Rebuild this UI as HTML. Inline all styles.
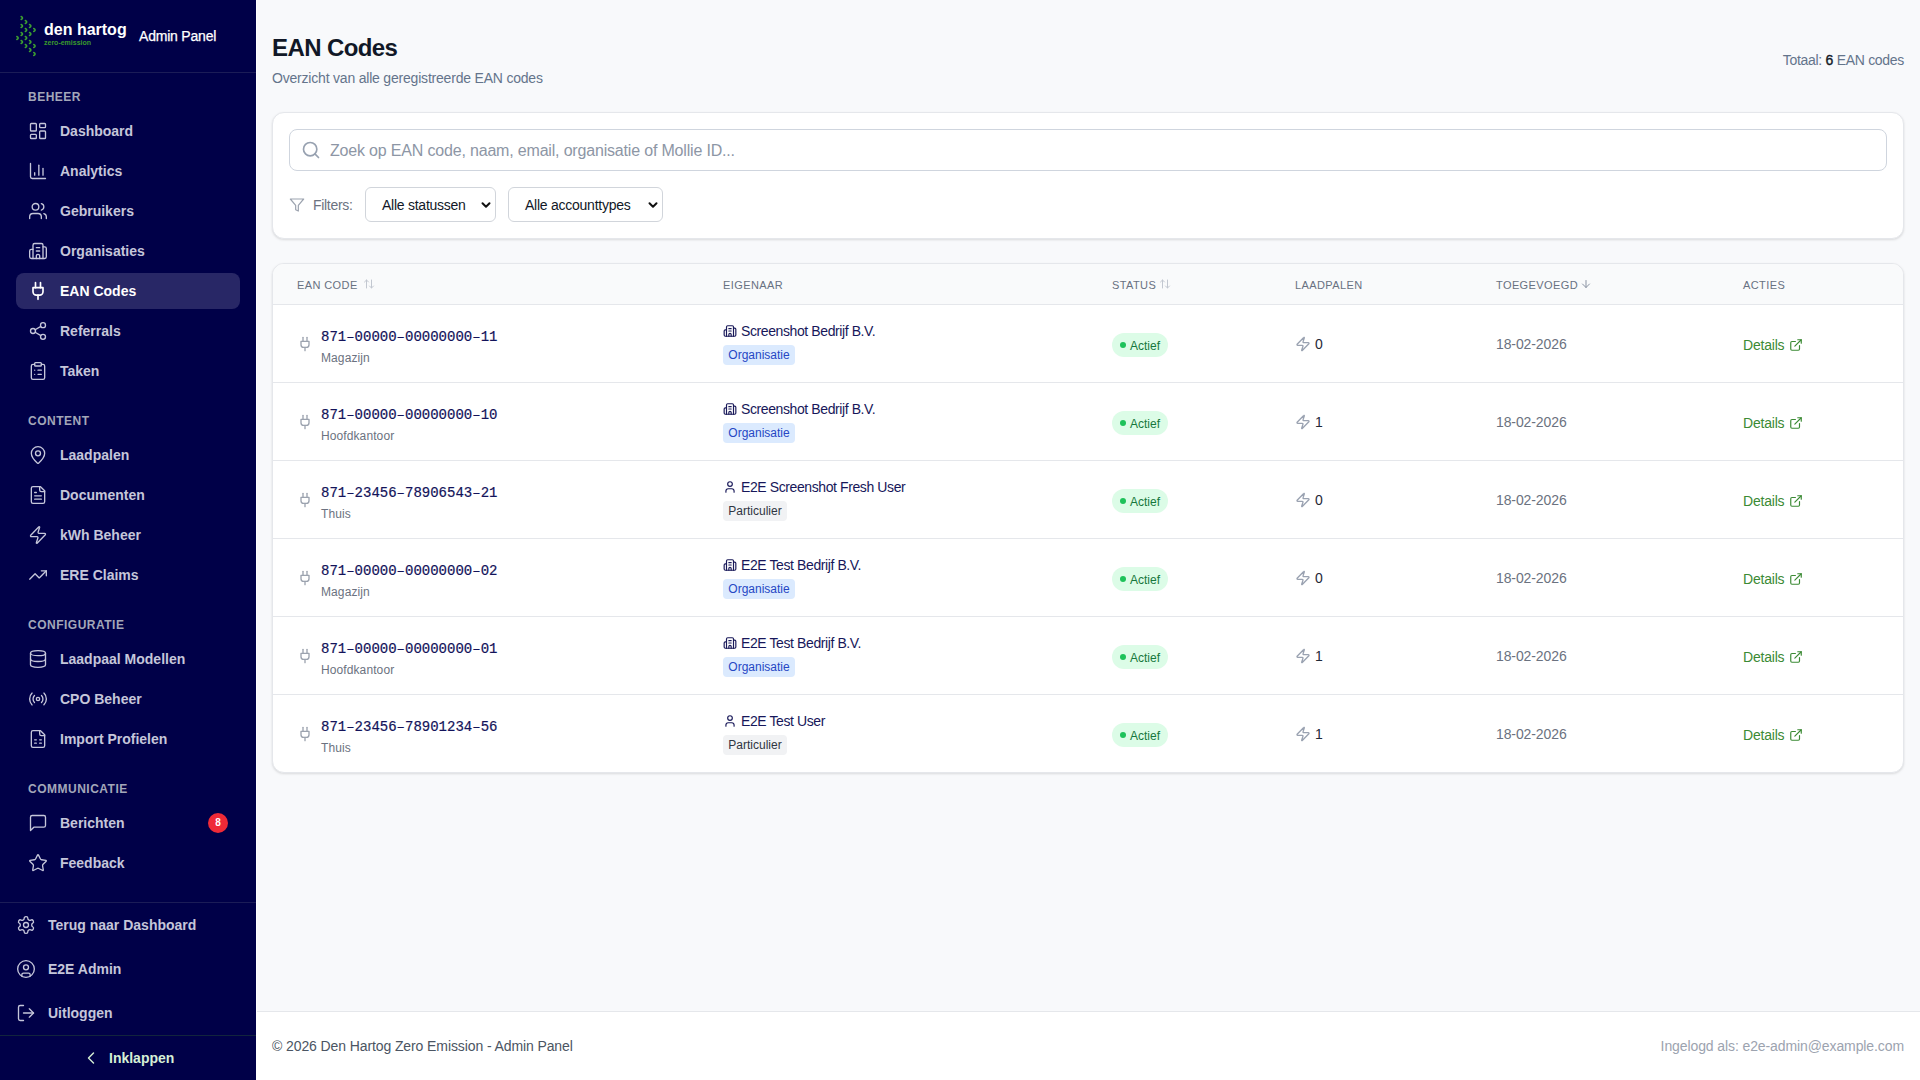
<!DOCTYPE html>
<html><head><meta charset="utf-8"><title>EAN Codes</title>
<style>
*{box-sizing:border-box;margin:0;padding:0}
html,body{width:1920px;height:1080px;overflow:hidden;background:#f8f9fb;font-family:"Liberation Sans",sans-serif}
.ic{position:absolute;display:block}
.t{position:absolute;white-space:nowrap}
#side{position:absolute;left:0;top:0;width:256px;height:1080px;background:#000048}
#side .hr{position:absolute;left:0;width:256px;height:1px}
.lbl{position:absolute;left:28px;height:16px;line-height:16px;font-size:12px;font-weight:bold;letter-spacing:0.5px;color:#a3a7b9;white-space:nowrap}
.nav{position:absolute;left:60px;height:20px;line-height:20px;font-size:14px;font-weight:bold;white-space:nowrap}
.act{position:absolute;left:16px;width:224px;height:36px;border-radius:8px;background:#282766}
.badge{position:absolute;left:208px;top:813px;width:20px;height:20px;border-radius:10px;background:#ef2a37;color:#fff;font-size:10px;font-weight:bold;line-height:20px;text-align:center}
#edge{position:absolute;left:256px;top:0;width:1px;height:1080px;background:#ffffff}

.card{position:absolute;left:272px;width:1632px;background:#fff;border:1px solid #e5e7eb;border-radius:12px;box-shadow:0 1px 3px rgba(0,0,0,.08),0 1px 2px rgba(0,0,0,.05)}
.th{position:absolute;top:278px;font-size:11px;line-height:14px;color:#687182;letter-spacing:0.4px;white-space:nowrap}
.mono{font-family:"Liberation Mono",monospace;font-size:14px;line-height:16px;color:#13135a;-webkit-text-stroke:0.2px #13135a}
.pill{position:absolute;height:20px;border-radius:4px;font-size:12px;line-height:21px;text-align:center}
</style></head><body>
<div id="side">
<svg class="ic" style="left:0;top:0" width="48" height="72" viewBox="0 0 48 72" fill="none" stroke="#3c9f31" stroke-width="1.5" stroke-linecap="round"><path d="M21.10 16.50Q24.00 18.00 21.10 19.50M25.30 20.50Q28.20 22.00 25.30 23.50M21.10 24.50Q24.00 26.00 21.10 27.50M29.50 24.50Q32.40 26.00 29.50 27.50M25.30 28.50Q28.20 30.00 25.30 31.50M33.70 28.50Q36.60 30.00 33.70 31.50M21.10 32.50Q24.00 34.00 21.10 35.50M29.50 32.50Q32.40 34.00 29.50 35.50M16.80 36.50Q19.70 38.00 16.80 39.50M25.30 36.50Q28.20 38.00 25.30 39.50M21.10 40.50Q24.00 42.00 21.10 43.50M29.50 40.50Q32.40 42.00 29.50 43.50M25.30 44.50Q28.20 46.00 25.30 47.50M33.70 44.50Q36.60 46.00 33.70 47.50M29.50 48.50Q32.40 50.00 29.50 51.50M33.70 52.50Q36.60 54.00 33.70 55.50"/></svg>
<div class="t" style="left:44px;top:20px;font-size:16px;font-weight:bold;color:#fff;line-height:20px">den hartog</div>
<div class="t" style="left:44px;top:38px;font-size:7px;font-weight:bold;color:#3b9a2d;line-height:9px">zero-emission</div>
<div class="t" style="left:139px;top:27px;font-size:14px;color:#fff;line-height:18px;letter-spacing:-0.2px;-webkit-text-stroke:0.25px #fff">Admin Panel</div>
<div class="hr" style="top:72px;background:#1b1c57"></div>
<div class="lbl" style="top:88.5px">BEHEER</div>
<div class="lbl" style="top:412.5px">CONTENT</div>
<div class="lbl" style="top:616.5px">CONFIGURATIE</div>
<div class="lbl" style="top:780.5px">COMMUNICATIE</div>
<svg class="ic" style="left:28px;top:121px;" width="20" height="20" viewBox="0 0 24 24" fill="none" stroke="#c5c6da" stroke-width="1.6" stroke-linecap="round" stroke-linejoin="round"><rect width="7" height="9" x="3" y="3" rx="1"/><rect width="7" height="5" x="14" y="3" rx="1"/><rect width="7" height="9" x="14" y="12" rx="1"/><rect width="7" height="5" x="3" y="16" rx="1"/></svg>
<div class="nav" style="top:121px;color:#c5c6da">Dashboard</div>
<svg class="ic" style="left:28px;top:161px;" width="20" height="20" viewBox="0 0 24 24" fill="none" stroke="#c5c6da" stroke-width="1.6" stroke-linecap="round" stroke-linejoin="round"><path d="M3 3v16a2 2 0 0 0 2 2h16"/><path d="M18 17V9"/><path d="M13 17V5"/><path d="M8 17v-3"/></svg>
<div class="nav" style="top:161px;color:#c5c6da">Analytics</div>
<svg class="ic" style="left:28px;top:201px;" width="20" height="20" viewBox="0 0 24 24" fill="none" stroke="#c5c6da" stroke-width="1.6" stroke-linecap="round" stroke-linejoin="round"><path d="M16 21v-2a4 4 0 0 0-4-4H6a4 4 0 0 0-4 4v2"/><circle cx="9" cy="7" r="4"/><path d="M22 21v-2a4 4 0 0 0-3-3.87"/><path d="M16 3.13a4 4 0 0 1 0 7.75"/></svg>
<div class="nav" style="top:201px;color:#c5c6da">Gebruikers</div>
<svg class="ic" style="left:28px;top:241px;" width="20" height="20" viewBox="0 0 24 24" fill="none" stroke="#c5c6da" stroke-width="1.6" stroke-linecap="round" stroke-linejoin="round"><path d="M10 12h4"/><path d="M10 8h4"/><path d="M14 21v-3a2 2 0 0 0-4 0v3"/><path d="M6 10H4a2 2 0 0 0-2 2v7a2 2 0 0 0 2 2h16a2 2 0 0 0 2-2V9a2 2 0 0 0-2-2h-2"/><path d="M6 21V5a2 2 0 0 1 2-2h8a2 2 0 0 1 2 2v16"/></svg>
<div class="nav" style="top:241px;color:#c5c6da">Organisaties</div>
<div class="act" style="top:273px"></div>
<svg class="ic" style="left:28px;top:281px;" width="20" height="20" viewBox="0 0 24 24" fill="none" stroke="#ffffff" stroke-width="2" stroke-linecap="round" stroke-linejoin="round"><path d="M12 22v-5"/><path d="M9 8V2"/><path d="M15 8V2"/><path d="M18 8v5a4 4 0 0 1-4 4h-4a4 4 0 0 1-4-4V8Z"/></svg>
<div class="nav" style="top:281px;color:#ffffff">EAN Codes</div>
<svg class="ic" style="left:28px;top:321px;" width="20" height="20" viewBox="0 0 24 24" fill="none" stroke="#c5c6da" stroke-width="1.6" stroke-linecap="round" stroke-linejoin="round"><circle cx="18" cy="5" r="3"/><circle cx="6" cy="12" r="3"/><circle cx="18" cy="19" r="3"/><line x1="8.59" x2="15.42" y1="13.51" y2="17.49"/><line x1="15.41" x2="8.59" y1="6.51" y2="10.49"/></svg>
<div class="nav" style="top:321px;color:#c5c6da">Referrals</div>
<svg class="ic" style="left:28px;top:361px;" width="20" height="20" viewBox="0 0 24 24" fill="none" stroke="#c5c6da" stroke-width="1.6" stroke-linecap="round" stroke-linejoin="round"><rect width="8" height="4" x="8" y="2" rx="1" ry="1"/><path d="M16 4h2a2 2 0 0 1 2 2v14a2 2 0 0 1-2 2H6a2 2 0 0 1-2-2V6a2 2 0 0 1 2-2h2"/><path d="M12 11h4"/><path d="M12 16h4"/><path d="M8 11h.01"/><path d="M8 16h.01"/></svg>
<div class="nav" style="top:361px;color:#c5c6da">Taken</div>
<svg class="ic" style="left:28px;top:445px;" width="20" height="20" viewBox="0 0 24 24" fill="none" stroke="#c5c6da" stroke-width="1.6" stroke-linecap="round" stroke-linejoin="round"><path d="M20 10c0 4.993-5.539 10.193-7.399 11.799a1 1 0 0 1-1.202 0C9.539 20.193 4 14.993 4 10a8 8 0 0 1 16 0"/><circle cx="12" cy="10" r="3"/></svg>
<div class="nav" style="top:445px;color:#c5c6da">Laadpalen</div>
<svg class="ic" style="left:28px;top:485px;" width="20" height="20" viewBox="0 0 24 24" fill="none" stroke="#c5c6da" stroke-width="1.6" stroke-linecap="round" stroke-linejoin="round"><path d="M15 2H6a2 2 0 0 0-2 2v16a2 2 0 0 0 2 2h12a2 2 0 0 0 2-2V7Z"/><path d="M14 2v4a2 2 0 0 0 2 2h4"/><path d="M10 9H8"/><path d="M16 13H8"/><path d="M16 17H8"/></svg>
<div class="nav" style="top:485px;color:#c5c6da">Documenten</div>
<svg class="ic" style="left:28px;top:525px;" width="20" height="20" viewBox="0 0 24 24" fill="none" stroke="#c5c6da" stroke-width="1.6" stroke-linecap="round" stroke-linejoin="round"><path d="M4 14a1 1 0 0 1-.78-1.63l9.9-10.2a.5.5 0 0 1 .86.46l-1.92 6.02A1 1 0 0 0 13 10h7a1 1 0 0 1 .78 1.63l-9.9 10.2a.5.5 0 0 1-.86-.46l1.92-6.02A1 1 0 0 0 11 14z"/></svg>
<div class="nav" style="top:525px;color:#c5c6da">kWh Beheer</div>
<svg class="ic" style="left:28px;top:565px;" width="20" height="20" viewBox="0 0 24 24" fill="none" stroke="#c5c6da" stroke-width="1.6" stroke-linecap="round" stroke-linejoin="round"><polyline points="22 7 13.5 15.5 8.5 10.5 2 17"/><polyline points="16 7 22 7 22 13"/></svg>
<div class="nav" style="top:565px;color:#c5c6da">ERE Claims</div>
<svg class="ic" style="left:28px;top:649px;" width="20" height="20" viewBox="0 0 24 24" fill="none" stroke="#c5c6da" stroke-width="1.6" stroke-linecap="round" stroke-linejoin="round"><ellipse cx="12" cy="5" rx="9" ry="3"/><path d="M3 5V19A9 3 0 0 0 21 19V5"/><path d="M3 12A9 3 0 0 0 21 12"/></svg>
<div class="nav" style="top:649px;color:#c5c6da">Laadpaal Modellen</div>
<svg class="ic" style="left:28px;top:689px;" width="20" height="20" viewBox="0 0 24 24" fill="none" stroke="#c5c6da" stroke-width="1.6" stroke-linecap="round" stroke-linejoin="round"><path d="M4.9 19.1C1 15.2 1 8.8 4.9 4.9"/><path d="M7.8 16.2c-2.3-2.3-2.3-6.1 0-8.5"/><circle cx="12" cy="12" r="2"/><path d="M16.2 7.8c2.3 2.3 2.3 6.1 0 8.5"/><path d="M19.1 4.9C23 8.8 23 15.1 19.1 19"/></svg>
<div class="nav" style="top:689px;color:#c5c6da">CPO Beheer</div>
<svg class="ic" style="left:28px;top:729px;" width="20" height="20" viewBox="0 0 24 24" fill="none" stroke="#c5c6da" stroke-width="1.6" stroke-linecap="round" stroke-linejoin="round"><path d="M15 2H6a2 2 0 0 0-2 2v16a2 2 0 0 0 2 2h12a2 2 0 0 0 2-2V7Z"/><path d="M14 2v4a2 2 0 0 0 2 2h4"/><path d="M8 13h2"/><path d="M14 13h2"/><path d="M8 17h2"/><path d="M14 17h2"/></svg>
<div class="nav" style="top:729px;color:#c5c6da">Import Profielen</div>
<svg class="ic" style="left:28px;top:813px;" width="20" height="20" viewBox="0 0 24 24" fill="none" stroke="#c5c6da" stroke-width="1.6" stroke-linecap="round" stroke-linejoin="round"><path d="M21 15a2 2 0 0 1-2 2H7l-4 4V5a2 2 0 0 1 2-2h14a2 2 0 0 1 2 2z"/></svg>
<div class="nav" style="top:813px;color:#c5c6da">Berichten</div>
<svg class="ic" style="left:28px;top:853px;" width="20" height="20" viewBox="0 0 24 24" fill="none" stroke="#c5c6da" stroke-width="1.6" stroke-linecap="round" stroke-linejoin="round"><path d="M11.525 2.295a.53.53 0 0 1 .95 0l2.31 4.679a2.123 2.123 0 0 0 1.595 1.16l5.166.756a.53.53 0 0 1 .294.904l-3.736 3.638a2.123 2.123 0 0 0-.611 1.878l.882 5.14a.53.53 0 0 1-.771.56l-4.618-2.428a2.122 2.122 0 0 0-1.973 0L6.396 21.01a.53.53 0 0 1-.77-.56l.881-5.139a2.122 2.122 0 0 0-.611-1.879L2.16 9.795a.53.53 0 0 1 .294-.906l5.165-.755a2.122 2.122 0 0 0 1.597-1.16z"/></svg>
<div class="nav" style="top:853px;color:#c5c6da">Feedback</div>
<div class="badge">8</div>
<div class="hr" style="top:902px;background:#1b1c57"></div>
<svg class="ic" style="left:16px;top:915px;" width="20" height="20" viewBox="0 0 24 24" fill="none" stroke="#c5c6da" stroke-width="1.6" stroke-linecap="round" stroke-linejoin="round"><path d="M12.22 2h-.44a2 2 0 0 0-2 2v.18a2 2 0 0 1-1 1.73l-.43.25a2 2 0 0 1-2 0l-.15-.08a2 2 0 0 0-2.73.73l-.22.38a2 2 0 0 0 .73 2.73l.15.1a2 2 0 0 1 1 1.72v.51a2 2 0 0 1-1 1.74l-.15.09a2 2 0 0 0-.73 2.73l.22.38a2 2 0 0 0 2.73.73l.15-.08a2 2 0 0 1 2 0l.43.25a2 2 0 0 1 1 1.73V20a2 2 0 0 0 2 2h.44a2 2 0 0 0 2-2v-.18a2 2 0 0 1 1-1.73l.43-.25a2 2 0 0 1 2 0l.15.08a2 2 0 0 0 2.73-.73l.22-.39a2 2 0 0 0-.73-2.73l-.15-.08a2 2 0 0 1-1-1.74v-.5a2 2 0 0 1 1-1.74l.15-.09a2 2 0 0 0 .73-2.73l-.22-.38a2 2 0 0 0-2.73-.73l-.15.08a2 2 0 0 1-2 0l-.43-.25a2 2 0 0 1-1-1.73V4a2 2 0 0 0-2-2z"/><circle cx="12" cy="12" r="3"/></svg>
<div class="nav" style="left:48px;top:915px;color:#c5c6da">Terug naar Dashboard</div>
<svg class="ic" style="left:16px;top:959px;" width="20" height="20" viewBox="0 0 24 24" fill="none" stroke="#c5c6da" stroke-width="1.6" stroke-linecap="round" stroke-linejoin="round"><circle cx="12" cy="12" r="10"/><circle cx="12" cy="10" r="3"/><path d="M7 20.662V19a2 2 0 0 1 2-2h6a2 2 0 0 1 2 2v1.662"/></svg>
<div class="nav" style="left:48px;top:959px;color:#c5c6da">E2E Admin</div>
<svg class="ic" style="left:16px;top:1003px;" width="20" height="20" viewBox="0 0 24 24" fill="none" stroke="#c5c6da" stroke-width="1.6" stroke-linecap="round" stroke-linejoin="round"><path d="M9 21H5a2 2 0 0 1-2-2V5a2 2 0 0 1 2-2h4"/><polyline points="16 17 21 12 16 7"/><line x1="21" x2="9" y1="12" y2="12"/></svg>
<div class="nav" style="left:48px;top:1003px;color:#c5c6da">Uitloggen</div>
<div class="hr" style="top:1035px;background:#12243d"></div>
<svg class="ic" style="left:81px;top:1048px;" width="20" height="20" viewBox="0 0 24 24" fill="none" stroke="#d3ecd3" stroke-width="1.7" stroke-linecap="round" stroke-linejoin="round"><path d="m15 18-6-6 6-6"/></svg>
<div class="nav" style="left:109px;top:1048px;color:#d6efd6">Inklappen</div>
</div>
<div id="edge"></div>
<div class="t" style="left:272px;top:33px;font-size:24px;font-weight:bold;letter-spacing:-0.6px;color:#111827;line-height:30px">EAN Codes</div>
<div class="t" style="left:272px;top:70px;font-size:14px;color:#64748b;line-height:16px;letter-spacing:-0.2px">Overzicht van alle geregistreerde EAN codes</div>
<div class="t" style="right:16px;top:52px;font-size:14px;color:#64748b;line-height:16px;letter-spacing:-0.3px">Totaal: <span style="color:#111827;-webkit-text-stroke:0.35px #111827">6</span> EAN codes</div>
<div class="card" style="top:112px;height:127px"></div>
<div style="position:absolute;left:289px;top:129px;width:1598px;height:42px;border:1px solid #cfd5de;border-radius:8px;background:#fff"></div>
<svg class="ic" style="left:301px;top:140px;" width="20" height="20" viewBox="0 0 24 24" fill="none" stroke="#97a1b0" stroke-width="2" stroke-linecap="round" stroke-linejoin="round"><circle cx="11" cy="11" r="8"/><path d="m21 21-4.3-4.3"/></svg>
<div class="t" style="left:330px;top:142px;font-size:16px;color:#8d96a5;line-height:18px;letter-spacing:-0.18px">Zoek op EAN code, naam, email, organisatie of Mollie ID...</div>
<svg class="ic" style="left:289px;top:197px;" width="16" height="16" viewBox="0 0 24 24" fill="none" stroke="#9ca3af" stroke-width="1.8" stroke-linecap="round" stroke-linejoin="round"><polygon points="22 3 2 3 10 12.46 10 19 14 21 14 12.46 22 3"/></svg>
<div class="t" style="left:313px;top:197px;font-size:14px;color:#6b7280;line-height:16px;letter-spacing:-0.3px">Filters:</div>
<div style="position:absolute;left:365px;top:187px;width:131px;height:35px;border:1px solid #d1d5db;border-radius:6px;background:#fff"></div>
<div class="t" style="left:382px;top:197px;font-size:14px;color:#111827;line-height:16px;letter-spacing:-0.25px">Alle statussen</div>
<svg class="ic" style="left:481px;top:200px" width="10" height="10" viewBox="0 0 10 10" fill="none" stroke="#111" stroke-width="2" stroke-linecap="round" stroke-linejoin="round"><path d="M1.5 3.2 5 6.7 8.5 3.2"/></svg>
<div style="position:absolute;left:508px;top:187px;width:155px;height:35px;border:1px solid #d1d5db;border-radius:6px;background:#fff"></div>
<div class="t" style="left:525px;top:197px;font-size:14px;color:#111827;line-height:16px;letter-spacing:-0.25px">Alle accounttypes</div>
<svg class="ic" style="left:648px;top:200px" width="10" height="10" viewBox="0 0 10 10" fill="none" stroke="#111" stroke-width="2" stroke-linecap="round" stroke-linejoin="round"><path d="M1.5 3.2 5 6.7 8.5 3.2"/></svg>
<div class="card" style="top:263px;height:510px;overflow:hidden"><div style="position:absolute;left:0;top:0;width:100%;height:41px;background:#f9fafb;border-bottom:1px solid #e5e7eb"></div></div>
<div class="th" style="left:297px">EAN CODE</div>
<div class="th" style="left:723px">EIGENAAR</div>
<div class="th" style="left:1112px">STATUS</div>
<div class="th" style="left:1295px">LAADPALEN</div>
<div class="th" style="left:1496px">TOEGEVOEGD</div>
<div class="th" style="left:1743px">ACTIES</div>
<svg class="ic" style="left:363px;top:278px;" width="12" height="12" viewBox="0 0 24 24" fill="none" stroke="#c2c7d0" stroke-width="2" stroke-linecap="round" stroke-linejoin="round"><path d="m21 16-4 4-4-4"/><path d="M17 20V4"/><path d="m3 8 4-4 4 4"/><path d="M7 4v16"/></svg>
<svg class="ic" style="left:1159px;top:278px;" width="12" height="12" viewBox="0 0 24 24" fill="none" stroke="#c2c7d0" stroke-width="2" stroke-linecap="round" stroke-linejoin="round"><path d="m21 16-4 4-4-4"/><path d="M17 20V4"/><path d="m3 8 4-4 4 4"/><path d="M7 4v16"/></svg>
<svg class="ic" style="left:1580px;top:278px;" width="12" height="12" viewBox="0 0 24 24" fill="none" stroke="#8a93a3" stroke-width="2" stroke-linecap="round" stroke-linejoin="round"><path d="M12 5v14"/><path d="m19 12-7 7-7-7"/></svg>
<div style="position:absolute;left:273px;top:382px;width:1630px;height:1px;background:#e5e7eb"></div>
<svg class="ic" style="left:297px;top:336px;" width="16" height="16" viewBox="0 0 24 24" fill="none" stroke="#9ca3af" stroke-width="2" stroke-linecap="round" stroke-linejoin="round"><path d="M12 22v-5"/><path d="M9 8V2"/><path d="M15 8V2"/><path d="M18 8v5a4 4 0 0 1-4 4h-4a4 4 0 0 1-4-4V8Z"/></svg>
<div class="t mono" style="left:321px;top:329px">871&#8211;00000&#8211;00000000&#8211;11</div>
<div class="t" style="left:321px;top:351px;font-size:12px;line-height:14px;color:#6b7280;letter-spacing:0.1px">Magazijn</div>
<svg class="ic" style="left:723px;top:324px;" width="14" height="14" viewBox="0 0 24 24" fill="none" stroke="#1a1a5a" stroke-width="2" stroke-linecap="round" stroke-linejoin="round"><path d="M10 12h4"/><path d="M10 8h4"/><path d="M14 21v-3a2 2 0 0 0-4 0v3"/><path d="M6 10H4a2 2 0 0 0-2 2v7a2 2 0 0 0 2 2h16a2 2 0 0 0 2-2V9a2 2 0 0 0-2-2h-2"/><path d="M6 21V5a2 2 0 0 1 2-2h8a2 2 0 0 1 2 2v16"/></svg>
<div class="t" style="left:741px;top:323px;font-size:14px;line-height:16px;color:#17175a;letter-spacing:-0.4px">Screenshot Bedrijf B.V.</div>
<div class="pill" style="left:723px;top:345px;width:72px;background:#dbeafe;color:#2647c4">Organisatie</div>
<div style="position:absolute;left:1112px;top:333px;width:56px;height:24px;border-radius:12px;background:#dcfce7"></div>
<div style="position:absolute;left:1120px;top:342px;width:6px;height:6px;border-radius:3px;background:#1ec25a"></div>
<div class="t" style="left:1130px;top:339px;font-size:12px;line-height:14px;color:#16783c">Actief</div>
<svg class="ic" style="left:1295px;top:336px;" width="16" height="16" viewBox="0 0 24 24" fill="none" stroke="#9aa2b1" stroke-width="2" stroke-linecap="round" stroke-linejoin="round"><path d="M4 14a1 1 0 0 1-.78-1.63l9.9-10.2a.5.5 0 0 1 .86.46l-1.92 6.02A1 1 0 0 0 13 10h7a1 1 0 0 1 .78 1.63l-9.9 10.2a.5.5 0 0 1-.86-.46l1.92-6.02A1 1 0 0 0 11 14z"/></svg>
<div class="t" style="left:1315px;top:336px;font-size:14px;line-height:16px;color:#1f2937">0</div>
<div class="t" style="left:1496px;top:336px;font-size:14px;line-height:16px;color:#6b7280;letter-spacing:-0.1px">18-02-2026</div>
<div class="t" style="left:1743px;top:337px;font-size:14px;line-height:16px;color:#3b8a34;letter-spacing:-0.2px">Details</div>
<svg class="ic" style="left:1789px;top:338px;" width="14" height="14" viewBox="0 0 24 24" fill="none" stroke="#3b8a34" stroke-width="2" stroke-linecap="round" stroke-linejoin="round"><path d="M15 3h6v6"/><path d="M10 14 21 3"/><path d="M18 13v6a2 2 0 0 1-2 2H5a2 2 0 0 1-2-2V8a2 2 0 0 1 2-2h6"/></svg>
<div style="position:absolute;left:273px;top:460px;width:1630px;height:1px;background:#e5e7eb"></div>
<svg class="ic" style="left:297px;top:414px;" width="16" height="16" viewBox="0 0 24 24" fill="none" stroke="#9ca3af" stroke-width="2" stroke-linecap="round" stroke-linejoin="round"><path d="M12 22v-5"/><path d="M9 8V2"/><path d="M15 8V2"/><path d="M18 8v5a4 4 0 0 1-4 4h-4a4 4 0 0 1-4-4V8Z"/></svg>
<div class="t mono" style="left:321px;top:407px">871&#8211;00000&#8211;00000000&#8211;10</div>
<div class="t" style="left:321px;top:429px;font-size:12px;line-height:14px;color:#6b7280;letter-spacing:0.1px">Hoofdkantoor</div>
<svg class="ic" style="left:723px;top:402px;" width="14" height="14" viewBox="0 0 24 24" fill="none" stroke="#1a1a5a" stroke-width="2" stroke-linecap="round" stroke-linejoin="round"><path d="M10 12h4"/><path d="M10 8h4"/><path d="M14 21v-3a2 2 0 0 0-4 0v3"/><path d="M6 10H4a2 2 0 0 0-2 2v7a2 2 0 0 0 2 2h16a2 2 0 0 0 2-2V9a2 2 0 0 0-2-2h-2"/><path d="M6 21V5a2 2 0 0 1 2-2h8a2 2 0 0 1 2 2v16"/></svg>
<div class="t" style="left:741px;top:401px;font-size:14px;line-height:16px;color:#17175a;letter-spacing:-0.4px">Screenshot Bedrijf B.V.</div>
<div class="pill" style="left:723px;top:423px;width:72px;background:#dbeafe;color:#2647c4">Organisatie</div>
<div style="position:absolute;left:1112px;top:411px;width:56px;height:24px;border-radius:12px;background:#dcfce7"></div>
<div style="position:absolute;left:1120px;top:420px;width:6px;height:6px;border-radius:3px;background:#1ec25a"></div>
<div class="t" style="left:1130px;top:417px;font-size:12px;line-height:14px;color:#16783c">Actief</div>
<svg class="ic" style="left:1295px;top:414px;" width="16" height="16" viewBox="0 0 24 24" fill="none" stroke="#9aa2b1" stroke-width="2" stroke-linecap="round" stroke-linejoin="round"><path d="M4 14a1 1 0 0 1-.78-1.63l9.9-10.2a.5.5 0 0 1 .86.46l-1.92 6.02A1 1 0 0 0 13 10h7a1 1 0 0 1 .78 1.63l-9.9 10.2a.5.5 0 0 1-.86-.46l1.92-6.02A1 1 0 0 0 11 14z"/></svg>
<div class="t" style="left:1315px;top:414px;font-size:14px;line-height:16px;color:#1f2937">1</div>
<div class="t" style="left:1496px;top:414px;font-size:14px;line-height:16px;color:#6b7280;letter-spacing:-0.1px">18-02-2026</div>
<div class="t" style="left:1743px;top:415px;font-size:14px;line-height:16px;color:#3b8a34;letter-spacing:-0.2px">Details</div>
<svg class="ic" style="left:1789px;top:416px;" width="14" height="14" viewBox="0 0 24 24" fill="none" stroke="#3b8a34" stroke-width="2" stroke-linecap="round" stroke-linejoin="round"><path d="M15 3h6v6"/><path d="M10 14 21 3"/><path d="M18 13v6a2 2 0 0 1-2 2H5a2 2 0 0 1-2-2V8a2 2 0 0 1 2-2h6"/></svg>
<div style="position:absolute;left:273px;top:538px;width:1630px;height:1px;background:#e5e7eb"></div>
<svg class="ic" style="left:297px;top:492px;" width="16" height="16" viewBox="0 0 24 24" fill="none" stroke="#9ca3af" stroke-width="2" stroke-linecap="round" stroke-linejoin="round"><path d="M12 22v-5"/><path d="M9 8V2"/><path d="M15 8V2"/><path d="M18 8v5a4 4 0 0 1-4 4h-4a4 4 0 0 1-4-4V8Z"/></svg>
<div class="t mono" style="left:321px;top:485px">871&#8211;23456&#8211;78906543&#8211;21</div>
<div class="t" style="left:321px;top:507px;font-size:12px;line-height:14px;color:#6b7280;letter-spacing:0.1px">Thuis</div>
<svg class="ic" style="left:723px;top:480px;" width="14" height="14" viewBox="0 0 24 24" fill="none" stroke="#1a1a5a" stroke-width="2" stroke-linecap="round" stroke-linejoin="round"><path d="M19 21v-2a4 4 0 0 0-4-4H9a4 4 0 0 0-4 4v2"/><circle cx="12" cy="7" r="4"/></svg>
<div class="t" style="left:741px;top:479px;font-size:14px;line-height:16px;color:#17175a;letter-spacing:-0.4px">E2E Screenshot Fresh User</div>
<div class="pill" style="left:723px;top:501px;width:64px;background:#f1f2f4;color:#2f3542">Particulier</div>
<div style="position:absolute;left:1112px;top:489px;width:56px;height:24px;border-radius:12px;background:#dcfce7"></div>
<div style="position:absolute;left:1120px;top:498px;width:6px;height:6px;border-radius:3px;background:#1ec25a"></div>
<div class="t" style="left:1130px;top:495px;font-size:12px;line-height:14px;color:#16783c">Actief</div>
<svg class="ic" style="left:1295px;top:492px;" width="16" height="16" viewBox="0 0 24 24" fill="none" stroke="#9aa2b1" stroke-width="2" stroke-linecap="round" stroke-linejoin="round"><path d="M4 14a1 1 0 0 1-.78-1.63l9.9-10.2a.5.5 0 0 1 .86.46l-1.92 6.02A1 1 0 0 0 13 10h7a1 1 0 0 1 .78 1.63l-9.9 10.2a.5.5 0 0 1-.86-.46l1.92-6.02A1 1 0 0 0 11 14z"/></svg>
<div class="t" style="left:1315px;top:492px;font-size:14px;line-height:16px;color:#1f2937">0</div>
<div class="t" style="left:1496px;top:492px;font-size:14px;line-height:16px;color:#6b7280;letter-spacing:-0.1px">18-02-2026</div>
<div class="t" style="left:1743px;top:493px;font-size:14px;line-height:16px;color:#3b8a34;letter-spacing:-0.2px">Details</div>
<svg class="ic" style="left:1789px;top:494px;" width="14" height="14" viewBox="0 0 24 24" fill="none" stroke="#3b8a34" stroke-width="2" stroke-linecap="round" stroke-linejoin="round"><path d="M15 3h6v6"/><path d="M10 14 21 3"/><path d="M18 13v6a2 2 0 0 1-2 2H5a2 2 0 0 1-2-2V8a2 2 0 0 1 2-2h6"/></svg>
<div style="position:absolute;left:273px;top:616px;width:1630px;height:1px;background:#e5e7eb"></div>
<svg class="ic" style="left:297px;top:570px;" width="16" height="16" viewBox="0 0 24 24" fill="none" stroke="#9ca3af" stroke-width="2" stroke-linecap="round" stroke-linejoin="round"><path d="M12 22v-5"/><path d="M9 8V2"/><path d="M15 8V2"/><path d="M18 8v5a4 4 0 0 1-4 4h-4a4 4 0 0 1-4-4V8Z"/></svg>
<div class="t mono" style="left:321px;top:563px">871&#8211;00000&#8211;00000000&#8211;02</div>
<div class="t" style="left:321px;top:585px;font-size:12px;line-height:14px;color:#6b7280;letter-spacing:0.1px">Magazijn</div>
<svg class="ic" style="left:723px;top:558px;" width="14" height="14" viewBox="0 0 24 24" fill="none" stroke="#1a1a5a" stroke-width="2" stroke-linecap="round" stroke-linejoin="round"><path d="M10 12h4"/><path d="M10 8h4"/><path d="M14 21v-3a2 2 0 0 0-4 0v3"/><path d="M6 10H4a2 2 0 0 0-2 2v7a2 2 0 0 0 2 2h16a2 2 0 0 0 2-2V9a2 2 0 0 0-2-2h-2"/><path d="M6 21V5a2 2 0 0 1 2-2h8a2 2 0 0 1 2 2v16"/></svg>
<div class="t" style="left:741px;top:557px;font-size:14px;line-height:16px;color:#17175a;letter-spacing:-0.4px">E2E Test Bedrijf B.V.</div>
<div class="pill" style="left:723px;top:579px;width:72px;background:#dbeafe;color:#2647c4">Organisatie</div>
<div style="position:absolute;left:1112px;top:567px;width:56px;height:24px;border-radius:12px;background:#dcfce7"></div>
<div style="position:absolute;left:1120px;top:576px;width:6px;height:6px;border-radius:3px;background:#1ec25a"></div>
<div class="t" style="left:1130px;top:573px;font-size:12px;line-height:14px;color:#16783c">Actief</div>
<svg class="ic" style="left:1295px;top:570px;" width="16" height="16" viewBox="0 0 24 24" fill="none" stroke="#9aa2b1" stroke-width="2" stroke-linecap="round" stroke-linejoin="round"><path d="M4 14a1 1 0 0 1-.78-1.63l9.9-10.2a.5.5 0 0 1 .86.46l-1.92 6.02A1 1 0 0 0 13 10h7a1 1 0 0 1 .78 1.63l-9.9 10.2a.5.5 0 0 1-.86-.46l1.92-6.02A1 1 0 0 0 11 14z"/></svg>
<div class="t" style="left:1315px;top:570px;font-size:14px;line-height:16px;color:#1f2937">0</div>
<div class="t" style="left:1496px;top:570px;font-size:14px;line-height:16px;color:#6b7280;letter-spacing:-0.1px">18-02-2026</div>
<div class="t" style="left:1743px;top:571px;font-size:14px;line-height:16px;color:#3b8a34;letter-spacing:-0.2px">Details</div>
<svg class="ic" style="left:1789px;top:572px;" width="14" height="14" viewBox="0 0 24 24" fill="none" stroke="#3b8a34" stroke-width="2" stroke-linecap="round" stroke-linejoin="round"><path d="M15 3h6v6"/><path d="M10 14 21 3"/><path d="M18 13v6a2 2 0 0 1-2 2H5a2 2 0 0 1-2-2V8a2 2 0 0 1 2-2h6"/></svg>
<div style="position:absolute;left:273px;top:694px;width:1630px;height:1px;background:#e5e7eb"></div>
<svg class="ic" style="left:297px;top:648px;" width="16" height="16" viewBox="0 0 24 24" fill="none" stroke="#9ca3af" stroke-width="2" stroke-linecap="round" stroke-linejoin="round"><path d="M12 22v-5"/><path d="M9 8V2"/><path d="M15 8V2"/><path d="M18 8v5a4 4 0 0 1-4 4h-4a4 4 0 0 1-4-4V8Z"/></svg>
<div class="t mono" style="left:321px;top:641px">871&#8211;00000&#8211;00000000&#8211;01</div>
<div class="t" style="left:321px;top:663px;font-size:12px;line-height:14px;color:#6b7280;letter-spacing:0.1px">Hoofdkantoor</div>
<svg class="ic" style="left:723px;top:636px;" width="14" height="14" viewBox="0 0 24 24" fill="none" stroke="#1a1a5a" stroke-width="2" stroke-linecap="round" stroke-linejoin="round"><path d="M10 12h4"/><path d="M10 8h4"/><path d="M14 21v-3a2 2 0 0 0-4 0v3"/><path d="M6 10H4a2 2 0 0 0-2 2v7a2 2 0 0 0 2 2h16a2 2 0 0 0 2-2V9a2 2 0 0 0-2-2h-2"/><path d="M6 21V5a2 2 0 0 1 2-2h8a2 2 0 0 1 2 2v16"/></svg>
<div class="t" style="left:741px;top:635px;font-size:14px;line-height:16px;color:#17175a;letter-spacing:-0.4px">E2E Test Bedrijf B.V.</div>
<div class="pill" style="left:723px;top:657px;width:72px;background:#dbeafe;color:#2647c4">Organisatie</div>
<div style="position:absolute;left:1112px;top:645px;width:56px;height:24px;border-radius:12px;background:#dcfce7"></div>
<div style="position:absolute;left:1120px;top:654px;width:6px;height:6px;border-radius:3px;background:#1ec25a"></div>
<div class="t" style="left:1130px;top:651px;font-size:12px;line-height:14px;color:#16783c">Actief</div>
<svg class="ic" style="left:1295px;top:648px;" width="16" height="16" viewBox="0 0 24 24" fill="none" stroke="#9aa2b1" stroke-width="2" stroke-linecap="round" stroke-linejoin="round"><path d="M4 14a1 1 0 0 1-.78-1.63l9.9-10.2a.5.5 0 0 1 .86.46l-1.92 6.02A1 1 0 0 0 13 10h7a1 1 0 0 1 .78 1.63l-9.9 10.2a.5.5 0 0 1-.86-.46l1.92-6.02A1 1 0 0 0 11 14z"/></svg>
<div class="t" style="left:1315px;top:648px;font-size:14px;line-height:16px;color:#1f2937">1</div>
<div class="t" style="left:1496px;top:648px;font-size:14px;line-height:16px;color:#6b7280;letter-spacing:-0.1px">18-02-2026</div>
<div class="t" style="left:1743px;top:649px;font-size:14px;line-height:16px;color:#3b8a34;letter-spacing:-0.2px">Details</div>
<svg class="ic" style="left:1789px;top:650px;" width="14" height="14" viewBox="0 0 24 24" fill="none" stroke="#3b8a34" stroke-width="2" stroke-linecap="round" stroke-linejoin="round"><path d="M15 3h6v6"/><path d="M10 14 21 3"/><path d="M18 13v6a2 2 0 0 1-2 2H5a2 2 0 0 1-2-2V8a2 2 0 0 1 2-2h6"/></svg>
<svg class="ic" style="left:297px;top:726px;" width="16" height="16" viewBox="0 0 24 24" fill="none" stroke="#9ca3af" stroke-width="2" stroke-linecap="round" stroke-linejoin="round"><path d="M12 22v-5"/><path d="M9 8V2"/><path d="M15 8V2"/><path d="M18 8v5a4 4 0 0 1-4 4h-4a4 4 0 0 1-4-4V8Z"/></svg>
<div class="t mono" style="left:321px;top:719px">871&#8211;23456&#8211;78901234&#8211;56</div>
<div class="t" style="left:321px;top:741px;font-size:12px;line-height:14px;color:#6b7280;letter-spacing:0.1px">Thuis</div>
<svg class="ic" style="left:723px;top:714px;" width="14" height="14" viewBox="0 0 24 24" fill="none" stroke="#1a1a5a" stroke-width="2" stroke-linecap="round" stroke-linejoin="round"><path d="M19 21v-2a4 4 0 0 0-4-4H9a4 4 0 0 0-4 4v2"/><circle cx="12" cy="7" r="4"/></svg>
<div class="t" style="left:741px;top:713px;font-size:14px;line-height:16px;color:#17175a;letter-spacing:-0.4px">E2E Test User</div>
<div class="pill" style="left:723px;top:735px;width:64px;background:#f1f2f4;color:#2f3542">Particulier</div>
<div style="position:absolute;left:1112px;top:723px;width:56px;height:24px;border-radius:12px;background:#dcfce7"></div>
<div style="position:absolute;left:1120px;top:732px;width:6px;height:6px;border-radius:3px;background:#1ec25a"></div>
<div class="t" style="left:1130px;top:729px;font-size:12px;line-height:14px;color:#16783c">Actief</div>
<svg class="ic" style="left:1295px;top:726px;" width="16" height="16" viewBox="0 0 24 24" fill="none" stroke="#9aa2b1" stroke-width="2" stroke-linecap="round" stroke-linejoin="round"><path d="M4 14a1 1 0 0 1-.78-1.63l9.9-10.2a.5.5 0 0 1 .86.46l-1.92 6.02A1 1 0 0 0 13 10h7a1 1 0 0 1 .78 1.63l-9.9 10.2a.5.5 0 0 1-.86-.46l1.92-6.02A1 1 0 0 0 11 14z"/></svg>
<div class="t" style="left:1315px;top:726px;font-size:14px;line-height:16px;color:#1f2937">1</div>
<div class="t" style="left:1496px;top:726px;font-size:14px;line-height:16px;color:#6b7280;letter-spacing:-0.1px">18-02-2026</div>
<div class="t" style="left:1743px;top:727px;font-size:14px;line-height:16px;color:#3b8a34;letter-spacing:-0.2px">Details</div>
<svg class="ic" style="left:1789px;top:728px;" width="14" height="14" viewBox="0 0 24 24" fill="none" stroke="#3b8a34" stroke-width="2" stroke-linecap="round" stroke-linejoin="round"><path d="M15 3h6v6"/><path d="M10 14 21 3"/><path d="M18 13v6a2 2 0 0 1-2 2H5a2 2 0 0 1-2-2V8a2 2 0 0 1 2-2h6"/></svg>
<div style="position:absolute;left:257px;top:1011px;width:1663px;height:69px;background:#fff;border-top:1px solid #e5e7eb"></div>
<div class="t" style="left:272px;top:1038px;font-size:14px;line-height:16px;color:#4b5563;letter-spacing:-0.1px">© 2026 Den Hartog Zero Emission - Admin Panel</div>
<div class="t" style="right:16px;top:1038px;font-size:14px;line-height:16px;color:#9ca3af;letter-spacing:-0.1px">Ingelogd als: e2e-admin@example.com</div>
</body></html>
